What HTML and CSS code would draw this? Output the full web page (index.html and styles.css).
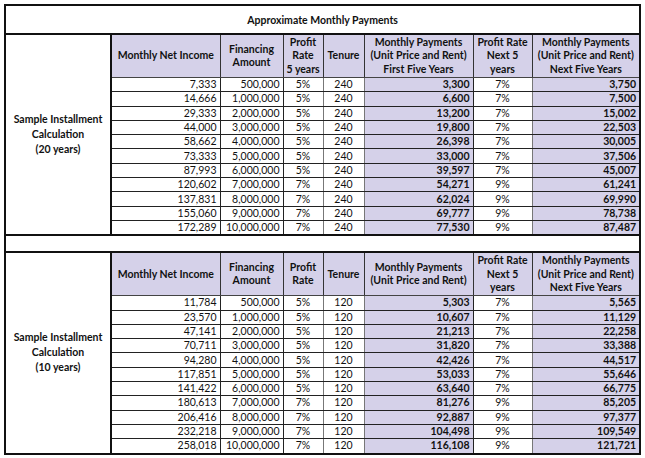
FILE: index.html
```html
<!DOCTYPE html>
<html>
<head>
<meta charset="utf-8">
<link rel="stylesheet" href="styles.css">
</head>
<body>
<table class="pay">
  <colgroup>
    <col class="c1"><col class="c2"><col class="c3"><col class="c4"><col class="c5"><col class="c6"><col class="c7"><col class="c8">
  </colgroup>
  <tr class="title"><td colspan="8">Approximate Monthly Payments</td></tr>
  <tr class="head">
    <td class="label" rowspan="12">Sample Installment<br>Calculation<br>(20 years)</td>
    <th>Monthly Net Income</th>
    <th>Financing<br>Amount</th>
    <th>Profit<br>Rate<br>5 years</th>
    <th>Tenure</th>
    <th>Monthly Payments<br>(Unit Price and Rent)<br>First Five Years</th>
    <th>Profit Rate<br>Next 5<br>years</th>
    <th>Monthly Payments<br>(Unit Price and Rent)<br>Next Five Years</th>
  </tr>
  <tr><td class="n">7,333</td><td class="n">500,000</td><td class="c">5%</td><td class="c">240</td><td class="p">3,300</td><td class="c">7%</td><td class="p">3,750</td></tr>
  <tr><td class="n">14,666</td><td class="n">1,000,000</td><td class="c">5%</td><td class="c">240</td><td class="p">6,600</td><td class="c">7%</td><td class="p">7,500</td></tr>
  <tr><td class="n">29,333</td><td class="n">2,000,000</td><td class="c">5%</td><td class="c">240</td><td class="p">13,200</td><td class="c">7%</td><td class="p">15,002</td></tr>
  <tr><td class="n">44,000</td><td class="n">3,000,000</td><td class="c">5%</td><td class="c">240</td><td class="p">19,800</td><td class="c">7%</td><td class="p">22,503</td></tr>
  <tr><td class="n">58,662</td><td class="n">4,000,000</td><td class="c">5%</td><td class="c">240</td><td class="p">26,398</td><td class="c">7%</td><td class="p">30,005</td></tr>
  <tr><td class="n">73,333</td><td class="n">5,000,000</td><td class="c">5%</td><td class="c">240</td><td class="p">33,000</td><td class="c">7%</td><td class="p">37,506</td></tr>
  <tr><td class="n">87,993</td><td class="n">6,000,000</td><td class="c">5%</td><td class="c">240</td><td class="p">39,597</td><td class="c">7%</td><td class="p">45,007</td></tr>
  <tr><td class="n">120,602</td><td class="n">7,000,000</td><td class="c">7%</td><td class="c">240</td><td class="p">54,271</td><td class="c">9%</td><td class="p">61,241</td></tr>
  <tr><td class="n">137,831</td><td class="n">8,000,000</td><td class="c">7%</td><td class="c">240</td><td class="p">62,024</td><td class="c">9%</td><td class="p">69,990</td></tr>
  <tr><td class="n">155,060</td><td class="n">9,000,000</td><td class="c">7%</td><td class="c">240</td><td class="p">69,777</td><td class="c">9%</td><td class="p">78,738</td></tr>
  <tr><td class="n">172,289</td><td class="n">10,000,000</td><td class="c">7%</td><td class="c">240</td><td class="p">77,530</td><td class="c">9%</td><td class="p">87,487</td></tr>
  <tr class="gap"><td colspan="8"></td></tr>
  <tr class="head">
    <td class="label" rowspan="12">Sample Installment<br>Calculation<br>(10 years)</td>
    <th>Monthly Net Income</th>
    <th>Financing<br>Amount</th>
    <th>Profit<br>Rate</th>
    <th>Tenure</th>
    <th>Monthly Payments<br>(Unit Price and Rent)</th>
    <th>Profit Rate<br>Next 5<br>years</th>
    <th>Monthly Payments<br>(Unit Price and Rent)<br>Next Five Years</th>
  </tr>
  <tr><td class="n">11,784</td><td class="n">500,000</td><td class="c">5%</td><td class="c">120</td><td class="p">5,303</td><td class="c">7%</td><td class="p">5,565</td></tr>
  <tr><td class="n">23,570</td><td class="n">1,000,000</td><td class="c">5%</td><td class="c">120</td><td class="p">10,607</td><td class="c">7%</td><td class="p">11,129</td></tr>
  <tr><td class="n">47,141</td><td class="n">2,000,000</td><td class="c">5%</td><td class="c">120</td><td class="p">21,213</td><td class="c">7%</td><td class="p">22,258</td></tr>
  <tr><td class="n">70,711</td><td class="n">3,000,000</td><td class="c">5%</td><td class="c">120</td><td class="p">31,820</td><td class="c">7%</td><td class="p">33,388</td></tr>
  <tr><td class="n">94,280</td><td class="n">4,000,000</td><td class="c">5%</td><td class="c">120</td><td class="p">42,426</td><td class="c">7%</td><td class="p">44,517</td></tr>
  <tr><td class="n">117,851</td><td class="n">5,000,000</td><td class="c">5%</td><td class="c">120</td><td class="p">53,033</td><td class="c">7%</td><td class="p">55,646</td></tr>
  <tr><td class="n">141,422</td><td class="n">6,000,000</td><td class="c">5%</td><td class="c">120</td><td class="p">63,640</td><td class="c">7%</td><td class="p">66,775</td></tr>
  <tr><td class="n">180,613</td><td class="n">7,000,000</td><td class="c">7%</td><td class="c">120</td><td class="p">81,276</td><td class="c">9%</td><td class="p">85,205</td></tr>
  <tr><td class="n">206,416</td><td class="n">8,000,000</td><td class="c">7%</td><td class="c">120</td><td class="p">92,887</td><td class="c">9%</td><td class="p">97,377</td></tr>
  <tr><td class="n">232,218</td><td class="n">9,000,000</td><td class="c">7%</td><td class="c">120</td><td class="p">104,498</td><td class="c">9%</td><td class="p">109,549</td></tr>
  <tr><td class="n">258,018</td><td class="n">10,000,000</td><td class="c">7%</td><td class="c">120</td><td class="p">116,108</td><td class="c">9%</td><td class="p">121,721</td></tr>
</table>
</body>
</html>
```
FILE: styles.css
```css
html, body {
  margin: 0;
  background: #ffffff;
}
body {
  padding: 4px 0 0 4px;
  font-family: "Lato", "Liberation Sans", sans-serif;
  font-size: 10.5px;
  color: #111;
}
.pay {
  border-collapse: collapse;
  table-layout: fixed;
  width: 636px;
  border: 2px solid #111;
}
.c1 { width: 106px; }
.c2 { width: 109px; }
.c3 { width: 63px; }
.c4 { width: 40px; }
.c5 { width: 41px; }
.c6 { width: 109px; }
.c7 { width: 59px; }
.c8 { width: 108px; }

.pay td, .pay th {
  padding: 0 3px;
  border: 1px solid #222;
  overflow: hidden;
  white-space: nowrap;
}
.title td {
  height: 27px;
  text-align: center;
  font-weight: 700;
  border-bottom: 2px solid #111;
}
.head th {
  height: 42px;
  background: #d5d1e9;
  font-weight: 700;
  line-height: 13.5px;
  text-align: center;
  vertical-align: middle;
  border: 1px solid #333;
  border-bottom: 1px solid #444;
}
.label {
  text-align: center;
  vertical-align: middle;
  font-weight: 700;
  line-height: 15px;
  border-right: 2px solid #111 !important;
}
.pay tr td.n, .pay tr td.c, .pay tr td.p {
  height: 13.3px;
  line-height: 13px;
}
.n { text-align: right; }
.c { text-align: center; }
.p {
  text-align: right;
  font-weight: 700;
  background: #d5d1e9;
}
.pay td.c { border-left-color: #777; border-right-color: #777; }
.gap td {
  height: 15px;
  border-top: 2px solid #111;
  border-bottom: 2px solid #111;
}
```
